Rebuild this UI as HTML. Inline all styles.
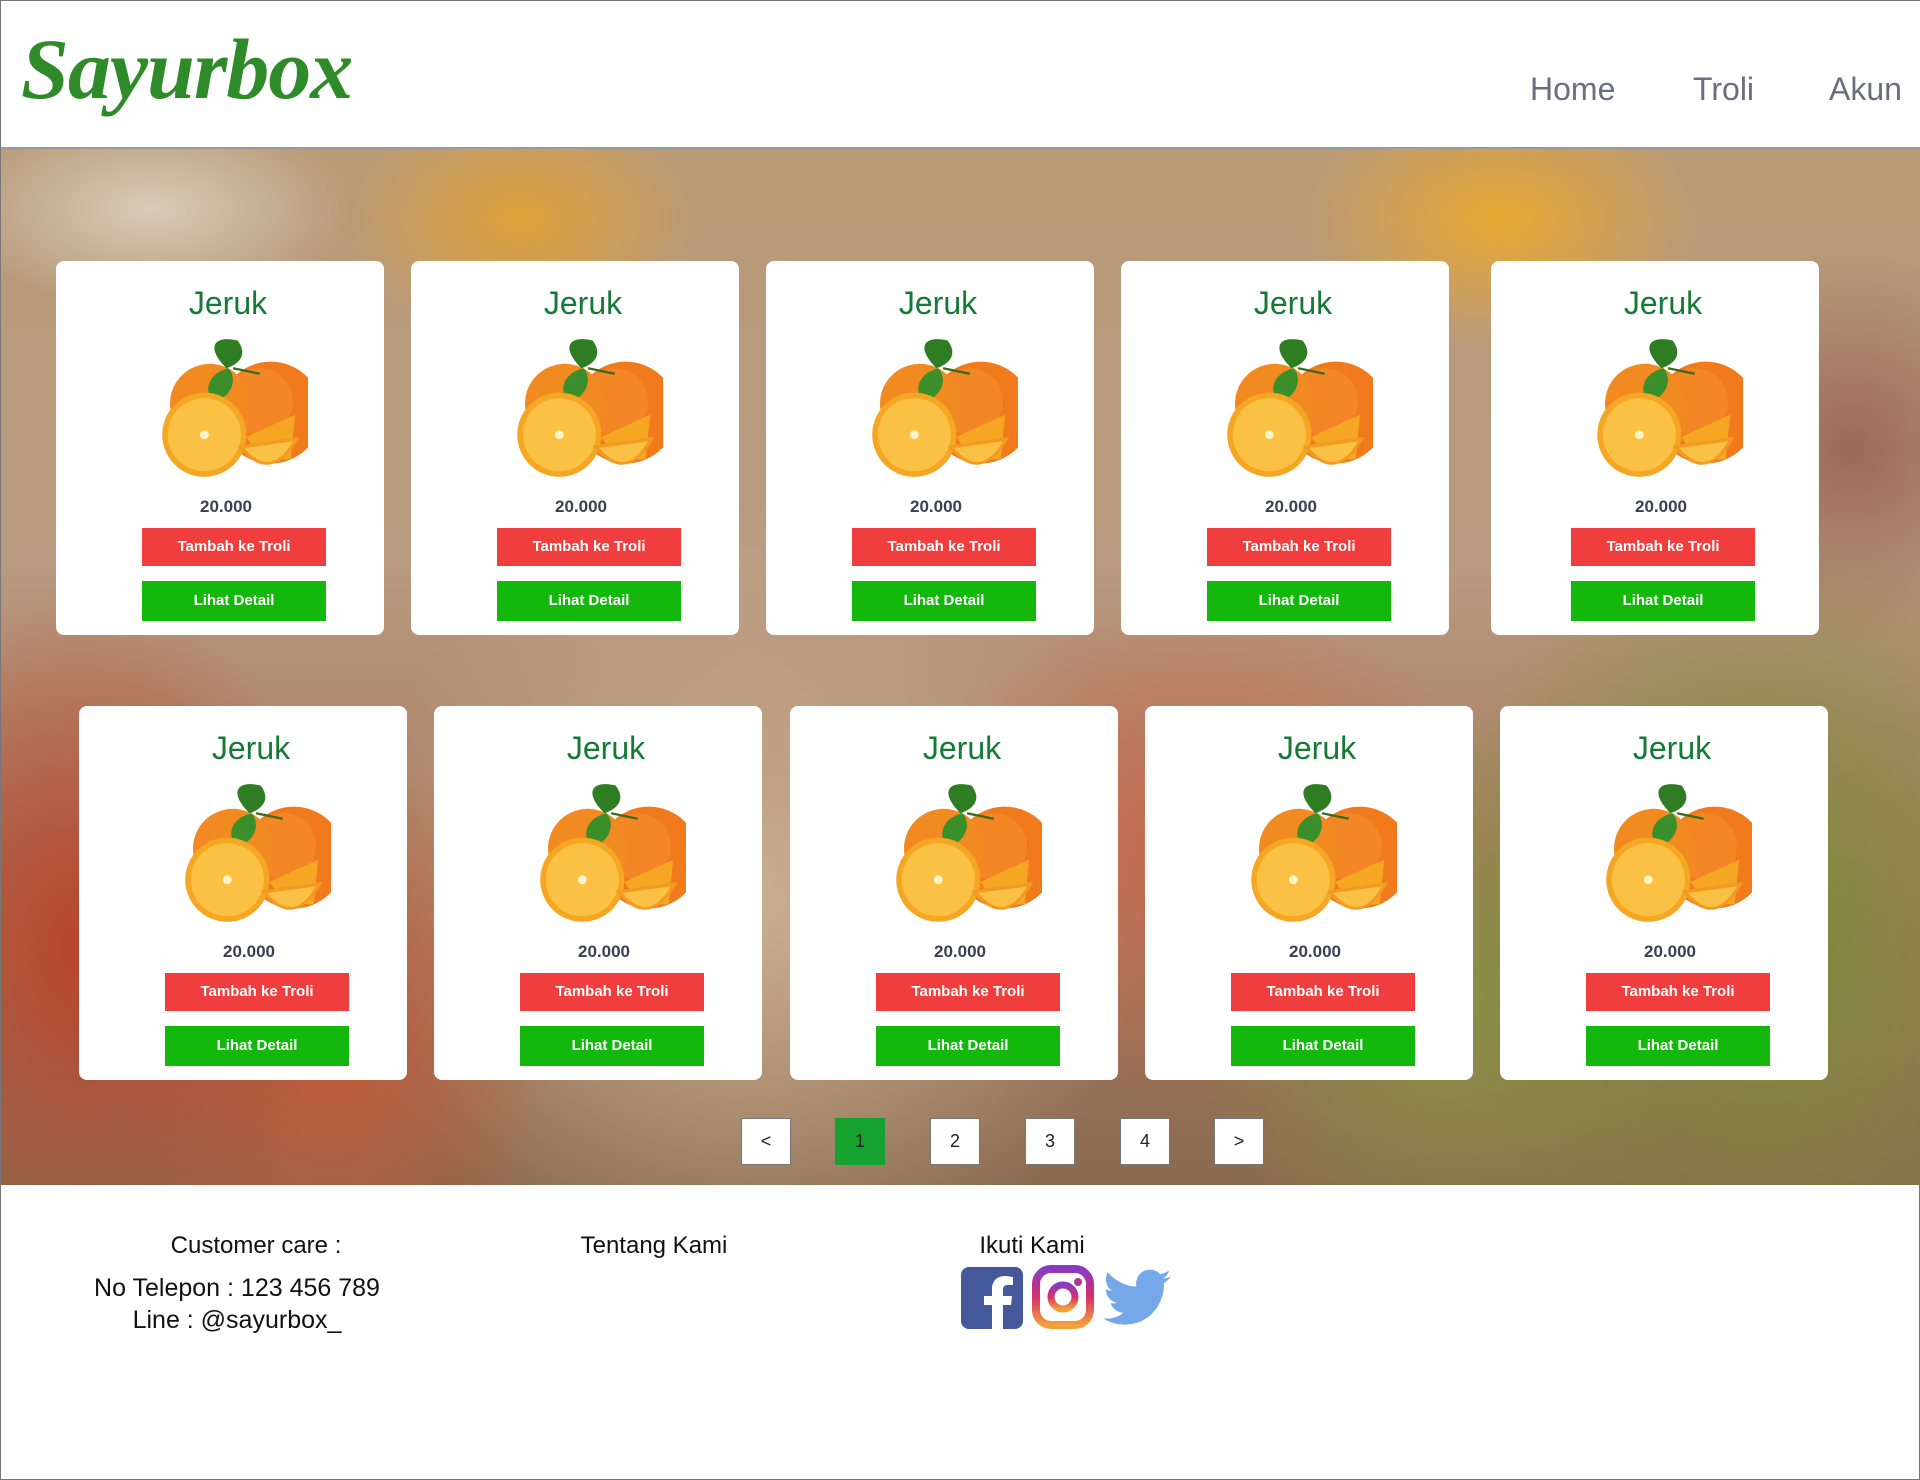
<!DOCTYPE html>
<html><head><meta charset="utf-8"><style>
*{box-sizing:border-box;margin:0;padding:0}
body{width:1920px;height:1480px;position:relative;background:#fff;font-family:"Liberation Sans",sans-serif;overflow:hidden;border:1px solid #777}
.hdr{position:absolute;left:0;top:0;width:1920px;height:148px;border-bottom:2px solid #999;background:#fff}
.logo{position:absolute;left:20px;top:18px;font-family:"Liberation Serif",serif;font-style:italic;font-weight:bold;font-size:86px;color:#2f8a2a;letter-spacing:-1px}
.nav{position:absolute;top:70px;font-size:32px;color:#6a6e7e}
.bg{position:absolute;left:0;top:148px;width:1920px;height:1036px;overflow:hidden;
background:
radial-gradient(ellipse 180px 120px at 520px 70px,#e0a23a,transparent),
radial-gradient(ellipse 200px 130px at 1500px 70px,#e8a832,transparent),
radial-gradient(ellipse 200px 200px at 1850px 300px,#9b6a58,transparent),
radial-gradient(ellipse 200px 100px at 150px 60px,#d8ccb8,transparent),
radial-gradient(ellipse 260px 360px at 80px 800px,#b8452e,transparent),
radial-gradient(ellipse 220px 300px at 330px 900px,#c05a3a,transparent),
radial-gradient(ellipse 330px 420px at 1760px 780px,#7c8c3a,transparent),
radial-gradient(ellipse 260px 300px at 1450px 850px,#8a9045,transparent),
radial-gradient(ellipse 300px 250px at 1200px 700px,#c86a50,transparent),
radial-gradient(ellipse 400px 400px at 750px 750px,#c8b090,transparent),
linear-gradient(#b89a78,#b89a80 40%,#a87a60 70%,#8a6a50);}
.card{position:absolute;width:328px;height:374px;background:#fff;border-radius:8px;text-align:center}
.card h3{position:absolute;top:24px;left:8px;width:100%;font-weight:normal;font-size:32px;color:#167a36}
.card svg{position:absolute;left:100px;top:74px;width:152px;height:144px}
.card .p{position:absolute;top:236px;left:6px;width:100%;font-size:17px;font-weight:bold;color:#3a4052}
.btn{position:absolute;left:86px;width:184px;height:38px;color:#fff;font-weight:bold;font-size:15px;line-height:38px}
.r{top:267px;background:#f03e3e}.g{top:320px;height:40px;line-height:40px;background:#14b80c}
.pg{position:absolute;top:1117px;width:50px;height:47px;background:#fff;border:1px solid #777;text-align:center;line-height:45px;font-size:18px;color:#222}
.ft{position:absolute;font-size:24px;color:#111;text-align:center}
</style></head><body>
<svg width="0" height="0" style="position:absolute"><defs>
<g id="or">
<circle cx="100" cy="70" r="46" fill="#f07a1c"/><circle cx="90" cy="60" r="30" fill="#f6922e" opacity=".5"/>
<circle cx="45" cy="62" r="36" fill="#f28a22"/>
<path d="M60 30 C40 10 50 0 70 5 C78 15 75 25 60 30Z" fill="#2f7d22"/>
<path d="M62 30 C40 35 40 55 50 60 C65 55 70 40 62 30Z" fill="#3a8f2a"/>
<path d="M66 30 L90 35" stroke="#3a6a1a" stroke-width="2"/>
<circle cx="40" cy="90" r="38" fill="#f5a623"/><circle cx="40" cy="90" r="33" fill="#fbc144"/><circle cx="40" cy="90" r="4" fill="#fff3c8"/>
<path d="M78 92 A40 40 0 0 0 118 112 L122 72 Z" fill="#f5a623"/>
<path d="M70 100 Q100 138 126 92 Z" fill="#f29a22"/><path d="M76 102 Q100 130 120 96 Z" fill="#fbc144"/>
</g></defs></svg>
<div class="hdr"><div class="logo">Sayurbox</div>
<div class="nav" style="left:1529px">Home</div><div class="nav" style="left:1692px">Troli</div><div class="nav" style="left:1828px">Akun</div></div>
<div class="bg"></div>

<div class="card" style="left:55px;top:260px"><h3>Jeruk</h3><svg viewBox="0 0 130 130"><use href="#or"/></svg><div class="p">20.000</div><div class="btn r">Tambah ke Troli</div><div class="btn g">Lihat Detail</div></div>
<div class="card" style="left:410px;top:260px"><h3>Jeruk</h3><svg viewBox="0 0 130 130"><use href="#or"/></svg><div class="p">20.000</div><div class="btn r">Tambah ke Troli</div><div class="btn g">Lihat Detail</div></div>
<div class="card" style="left:765px;top:260px"><h3>Jeruk</h3><svg viewBox="0 0 130 130"><use href="#or"/></svg><div class="p">20.000</div><div class="btn r">Tambah ke Troli</div><div class="btn g">Lihat Detail</div></div>
<div class="card" style="left:1120px;top:260px"><h3>Jeruk</h3><svg viewBox="0 0 130 130"><use href="#or"/></svg><div class="p">20.000</div><div class="btn r">Tambah ke Troli</div><div class="btn g">Lihat Detail</div></div>
<div class="card" style="left:1490px;top:260px"><h3>Jeruk</h3><svg viewBox="0 0 130 130"><use href="#or"/></svg><div class="p">20.000</div><div class="btn r" style="left:80px">Tambah ke Troli</div><div class="btn g" style="left:80px">Lihat Detail</div></div>

<div class="card" style="left:78px;top:705px"><h3>Jeruk</h3><svg viewBox="0 0 130 130"><use href="#or"/></svg><div class="p">20.000</div><div class="btn r">Tambah ke Troli</div><div class="btn g">Lihat Detail</div></div>
<div class="card" style="left:433px;top:705px"><h3>Jeruk</h3><svg viewBox="0 0 130 130"><use href="#or"/></svg><div class="p">20.000</div><div class="btn r">Tambah ke Troli</div><div class="btn g">Lihat Detail</div></div>
<div class="card" style="left:789px;top:705px"><h3>Jeruk</h3><svg viewBox="0 0 130 130"><use href="#or"/></svg><div class="p">20.000</div><div class="btn r">Tambah ke Troli</div><div class="btn g">Lihat Detail</div></div>
<div class="card" style="left:1144px;top:705px"><h3>Jeruk</h3><svg viewBox="0 0 130 130"><use href="#or"/></svg><div class="p">20.000</div><div class="btn r">Tambah ke Troli</div><div class="btn g">Lihat Detail</div></div>
<div class="card" style="left:1499px;top:705px"><h3>Jeruk</h3><svg viewBox="0 0 130 130"><use href="#or"/></svg><div class="p">20.000</div><div class="btn r">Tambah ke Troli</div><div class="btn g">Lihat Detail</div></div>

<div class="pg" style="left:740px">&lt;</div>
<div class="pg" style="left:834px;background:#16a22e;border-color:#16a22e">1</div>
<div class="pg" style="left:929px">2</div>
<div class="pg" style="left:1024px">3</div>
<div class="pg" style="left:1119px">4</div>
<div class="pg" style="left:1213px">&gt;</div>

<div class="ft" style="left:105px;top:1231px;width:300px">Customer care :</div>
<div class="ft" style="left:71px;top:1271px;width:330px;line-height:32px;font-size:25px">No Telepon : 123 456 789<br>Line : @sayurbox_</div>
<div class="ft" style="left:553px;top:1231px;width:200px">Tentang Kami</div>
<div class="ft" style="left:931px;top:1231px;width:200px">Ikuti Kami</div>
<svg style="position:absolute;left:960px;top:1266px" width="62" height="62" viewBox="0 0 62 62"><rect width="62" height="62" rx="8" fill="#45599a"/><path d="M42 62V38h8l1-9h-9v-6c0-3 1-5 5-5h5v-8c-2 0-5-1-8-1-8 0-13 5-13 13v7h-8v9h8v24z" fill="#fff"/></svg>
<svg style="position:absolute;left:1031px;top:1264px" width="62" height="64" viewBox="0 0 62 64"><defs><linearGradient id="ig" x1="0" y1="0" x2="0" y2="1"><stop offset="0" stop-color="#8a3ac0"/><stop offset=".5" stop-color="#d6306a"/><stop offset="1" stop-color="#f4a03a"/></linearGradient></defs><rect x="4" y="4" width="54" height="56" rx="15" fill="none" stroke="url(#ig)" stroke-width="8"/><circle cx="31" cy="32" r="12" fill="none" stroke="url(#ig)" stroke-width="7"/><circle cx="46" cy="17" r="4" fill="#b33590"/></svg>
<svg style="position:absolute;left:1102px;top:1268px" width="68" height="58" viewBox="0 0 24 20"><path d="M24 2.4a10 10 0 0 1-2.8.8A5 5 0 0 0 23.3.4a10 10 0 0 1-3.1 1.2A4.9 4.9 0 0 0 11.8 6 14 14 0 0 1 1.7.9a4.9 4.9 0 0 0 1.5 6.6A4.9 4.9 0 0 1 1 6.9a4.9 4.9 0 0 0 3.9 4.8 5 5 0 0 1-2.2.1 4.9 4.9 0 0 0 4.6 3.4A9.9 9.9 0 0 1 0 17.2 14 14 0 0 0 7.5 19.4c9.1 0 14-7.5 14-14v-.6A10 10 0 0 0 24 2.4z" fill="#74a8e8"/></svg>
</body></html>
